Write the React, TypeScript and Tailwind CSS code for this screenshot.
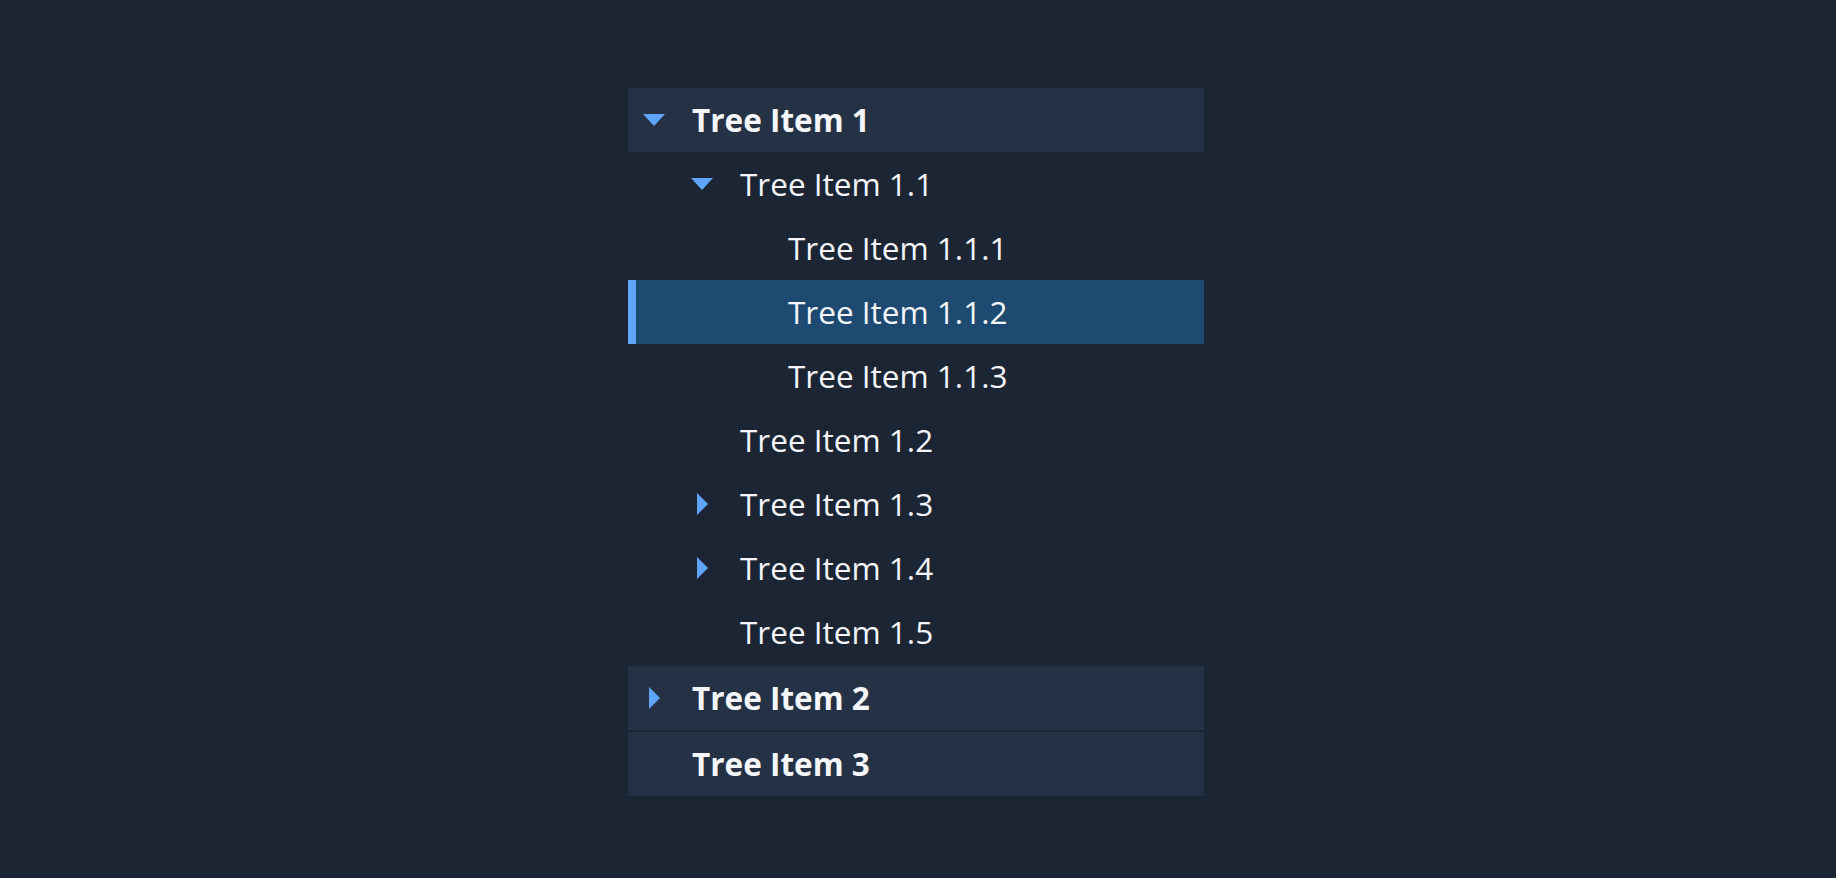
import { ReactNode } from "react";

type Node = {
    label: string;
    open?: boolean;
    selected?: boolean;
    children?: Node[];
};

const tree: Node[] = [
    {
        label: "Tree Item 1",
        open: true,
        children: [
            {
                label: "Tree Item 1.1",
                open: true,
                children: [
                    { label: "Tree Item 1.1.1" },
                    { label: "Tree Item 1.1.2", selected: true },
                    { label: "Tree Item 1.1.3" },
                ],
            },
            { label: "Tree Item 1.2" },
            { label: "Tree Item 1.3", children: [{ label: "Tree Item 1.3.1" }] },
            { label: "Tree Item 1.4", children: [{ label: "Tree Item 1.4.1" }] },
            { label: "Tree Item 1.5" },
        ],
    },
    { label: "Tree Item 2", children: [{ label: "Tree Item 2.1" }] },
    { label: "Tree Item 3" },
];

function Caret({ open }: { open?: boolean }) {
    // filled triangle, down when expanded, right when collapsed
    return open ? (
        <svg width="22" height="12" viewBox="0 0 22 12">
            <polygon points="0,0 22,0 11,12" fill="#60a5fa" />
        </svg>
    ) : (
        <svg width="11" height="22" viewBox="0 0 11 22">
            <polygon points="0,0 11,11 0,22" fill="#60a5fa" />
        </svg>
    );
}

const indent = ["pl-[14px]", "pl-[62px]", "pl-[110px]"];

function Row({ node, level }: { node: Node; level: number }) {
    const hasKids = !!node.children?.length;
    const top = level === 0;

    let bg = "";
    if (node.selected) bg = "bg-[#1e4a72]";
    else if (top) bg = "bg-[#253245]";

    return (
        <div className={`relative flex items-center h-16 ${bg} ${indent[level]}`}>
            {node.selected && <div className="absolute left-0 top-0 bottom-0 w-2 bg-[#60a5fa]" />}
            <div className="w-6 h-6 flex items-center justify-center shrink-0">
                {hasKids && <Caret open={node.open} />}
            </div>
            <span className={`ml-[26px] text-[31.5px] leading-none text-[#f4f6f9] whitespace-nowrap ${top ? "font-bold" : "font-normal"}`}>
                {node.label}
            </span>
        </div>
    );
}

function Branch({ node, level }: { node: Node; level: number }): ReactNode {
    return (
        <div>
            <Row node={node} level={level} />
            {node.open && node.children?.map((c) => <Branch key={c.label} node={c} level={level + 1} />)}
        </div>
    );
}

export default function App() {
    return (
        <div
            className="w-full min-h-[878px] bg-[#1b2534] pl-[628px] pt-[88px]"
            style={{ fontFamily: '"Open Sans", "Noto Sans", sans-serif' }}
        >
            <div className="w-[576px] flex flex-col gap-[2px]">
                {tree.map((n) => (
                    <Branch key={n.label} node={n} level={0} />
                ))}
            </div>
        </div>
    );
}
